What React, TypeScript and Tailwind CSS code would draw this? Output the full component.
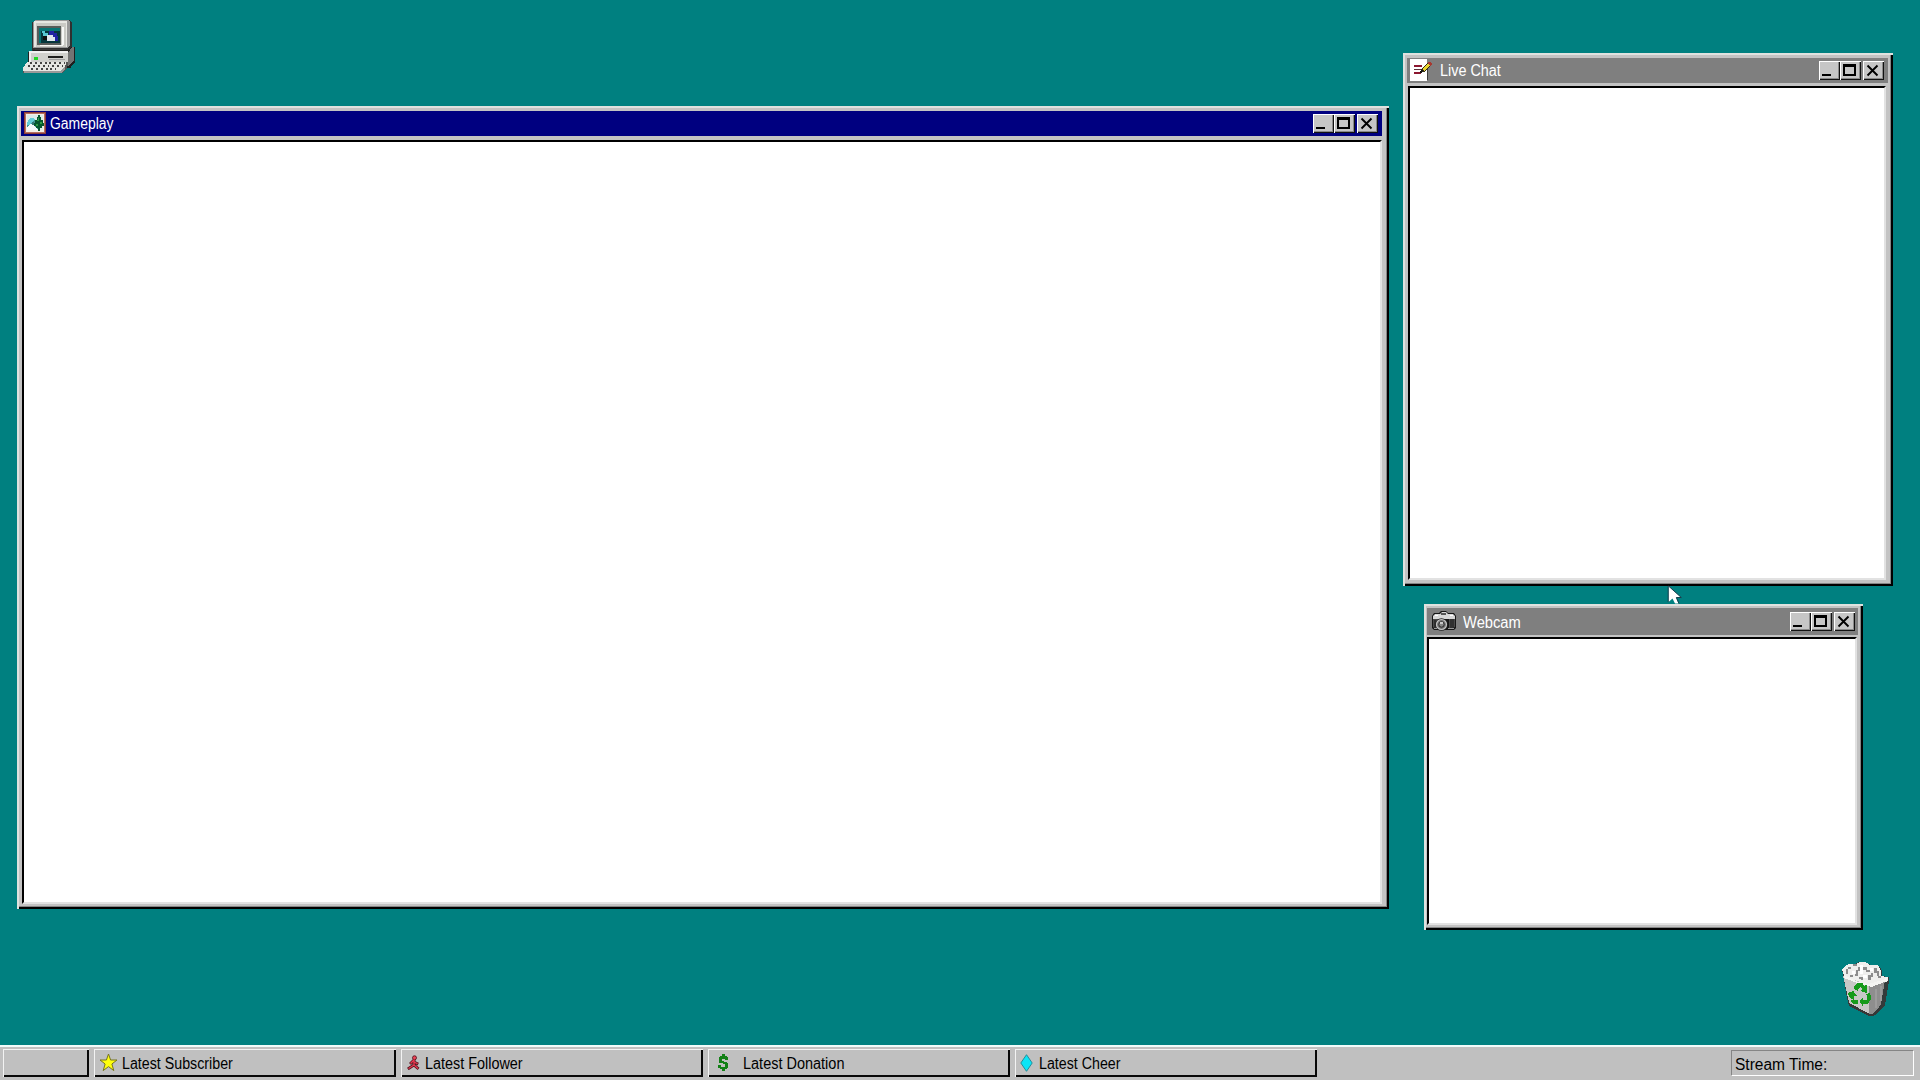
import type { ReactNode } from "react";

const raised =
  "bg-[#c3c3c3] shadow-[inset_2px_2px_0_#dfe2df,inset_-2px_-2px_0_#000,inset_-3px_-3px_0_#858585]";

function Label({ children, className = "" }: { children: ReactNode; className?: string }) {
  return (
    <span
      className={`block origin-left whitespace-nowrap font-['Liberation_Sans',Arial,sans-serif] text-[16px] leading-[18px] ${className}`}
    >
      {children}
    </span>
  );
}

function ControlButton({ kind }: { kind: "min" | "max" | "close" }) {
  return (
    <div className="h-[19px] w-[21px] bg-[#c6c6c6] shadow-[inset_1px_1px_0_#fff,inset_-1px_-1px_0_#111,inset_-2px_-2px_0_#8a8a8a]">
      <svg width="21" height="19" viewBox="0 0 21 19" fill="none" shapeRendering={kind === "close" ? "auto" : "crispEdges"}>
        {kind === "min" && <path d="M3 13h9v2H3z" fill="#000" />}
        {kind === "max" && <path d="M3 3h13v12H3zM5 6v7h9V6z" fill="#000" fillRule="evenodd" />}
        {kind === "close" && <path d="M4.5 4.5l10 10M14.5 4.5l-10 10" stroke="#000" strokeWidth="1.9" />}
      </svg>
    </div>
  );
}

function Window({
  frame,
  bar,
  client,
  icon,
  title,
  titleClass,
  controls,
}: {
  frame: string;
  bar: string;
  client: string;
  icon: ReactNode;
  title: string;
  titleClass: string;
  controls: string;
}) {
  return (
    <section className={`absolute flex flex-col ${raised} ${frame}`}>
      <header className={`flex shrink-0 items-start ${bar}`}>
        {icon}
        <Label className={`text-white ${titleClass}`}>{title}</Label>
        <div className={`ml-auto flex ${controls}`}>
          <ControlButton kind="min" />
          <ControlButton kind="max" />
          <div className="ml-[2px]">
            <ControlButton kind="close" />
          </div>
        </div>
      </header>
      <div className={`grow border-2 border-t-black border-l-black border-r-[#e2e2e2] border-b-[#e2e2e2] bg-white ${client}`} />
    </section>
  );
}

function PictureIcon() {
  return (
    <svg className="mt-[1px] ml-[3px] shrink-0" width="22" height="22" viewBox="0 0 22 22" shapeRendering="crispEdges">
      <path d="M0 0h22v22H0z" fill="#8e3c36" />
      <path d="M1 1h20v20H1z" fill="#b5705f" />
      <path d="M2 2h18v18H2z" fill="#f4efe9" />
      <path d="M3 3h16v15H3z" fill="#dcece9" />
      <path d="M3 11l4-5h3l4 6v5H3z" fill="#3f9696" />
      <path d="M6 6h3l2 2-6 5H3v-2z" fill="#64cdd6" />
      <path d="M3 15l3-3 3 1 3 2 2 3H3z" fill="#f6fafa" />
      <path d="M8 10h2v3H8z" fill="#347774" />
      <path d="M14 3h2v2h1v3h2v3h1v3h-2v2h-2v3h-2v-3h-2v-2h-2v-3h1V8h2V5h1z" fill="#07572e" />
      <path d="M14 6h1v3h-2V8h1zM16 10h2v2h-2zM12 12h2v2h-2z" fill="#2c9c43" />
    </svg>
  );
}

function NoteIcon() {
  return (
    <svg className="mt-[1px] ml-[3px] shrink-0" width="22" height="22" viewBox="0 0 22 22" shapeRendering="crispEdges">
      <path d="M0 0h17v22H0z" fill="#fff" />
      <path d="M17 10h1v11h-1z" fill="#3d3d3d" />
      <path d="M4 6h8v2H4zM4 13h7v2H4z" fill="#8c1730" />
      <path d="M4 10h7v1H4z" fill="#5b3039" />
      <path d="M10 14l1-4 7-6 3 3-7 6z" fill="#302a12" />
      <path d="M12 10l6-5 2 2-6 5z" fill="#e9d52e" />
      <path d="M18 3h2l2 2-1 2h-1l-3-3z" fill="#a73830" />
      <path d="M11 11h2v1h-1v2h-2z" fill="#111" />
    </svg>
  );
}

function CameraIcon() {
  return (
    <svg className="mt-[3px] ml-[4px] shrink-0" width="26" height="21" viewBox="0 0 26 21">
      <path d="M1 5l2-3h5l2-2h5l2 2h6l2 3v12l-2 2H3l-2-2z" fill="#161616" />
      <path d="M2 5l2-2h5l2-2h4l2 2h5l2 2v3H2z" fill="#d7d7d7" />
      <path d="M10 2h5v2h-5z" fill="#555" />
      <path d="M4 4h3v1H4zM19 4h3v1h-3z" fill="#fff" />
      <path d="M2 8h6v9H3l-1-1zM18 8h6v8l-2 1h-4z" fill="#4a4a4a" />
      <path d="M20 8v9M22 8v9M4 9v8" stroke="#171717" />
      <circle cx="10.5" cy="13.5" r="6.3" fill="#222" />
      <circle cx="10.5" cy="13.5" r="5" fill="#737373" stroke="#c4c4c4" strokeWidth="1.2" />
      <circle cx="10.5" cy="13.5" r="2.7" fill="#868686" stroke="#2a2a2a" />
      <path d="M9 11h3v2H9z" fill="#c9c9c9" />
      <path d="M3 17.5h3M17 17.5h6" stroke="#999" />
    </svg>
  );
}

function ComputerIcon() {
  return (
    <svg className="absolute top-[19px] left-[23px]" width="52" height="55" viewBox="0 0 53 56" shapeRendering="crispEdges">
      <path d="M10 4l4-3h34l3 3v25l-4 4H10z" fill="#303030" transform="translate(-1 0)" />
      <path d="M10 3l3-2h33l2 2v24l-3 3H10z" fill="#999" />
      <path d="M11 2h34v27H11z" fill="#e7e7e3" />
      <path d="M13 4h31v25H13z" fill="#cacac5" />
      <path d="M14 7h25v19H14z" fill="#575b59" />
      <path d="M16 9h22v15H16z" fill="#06363c" />
      <path d="M16 9h22v3H16zM16 12h2v12h-2z" fill="#087475" />
      <path d="M19 12h3v2h3v3h3v2h-4v-2h-4v-3h-1z" fill="#56c7d2" />
      <path d="M26 12h6v2h3v3h1v5h-8v-4h-2z" fill="#2122a2" />
      <path d="M24 16h7v2h2v4h-9z" fill="#dfe6ec" />
      <path d="M20 17h4v4h-4z" fill="#111" />
      <path d="M40 8h2v18h-2zM17 26h24v1H17z" fill="#f7f7f5" />
      <path d="M12 31h30v2H12z" fill="#3b3b3b" />
      <path d="M5 34l5-2h35l5-4h3v16l-5 6H5z" fill="#202020" />
      <path d="M6 33h40v12H6z" fill="#d0d0cd" />
      <path d="M46 34l4-5h2v13l-6 6z" fill="#747474" />
      <path d="M6 33h40v2H6zM6 35h2v9H6z" fill="#f0f0f0" />
      <path d="M25 38h16v2H25z" fill="#1d1d1d" />
      <path d="M26 41h17v1H26z" fill="#a0a0a0" />
      <path d="M11 39h4v3h-4z" fill="#22d626" />
      <path d="M4 44h42l-1 6-5 5H0v-4z" fill="#555" />
      <path d="M4 44h40l-1 4-5 5H0v-3z" fill="#e6e6e3" />
      <path d="M7 45h36M5 48h36M8 51h26" stroke="#444" strokeWidth="2" strokeDasharray="2 3" />
      <path d="M1 53h37l5-5v3l-4 4H1z" fill="#999" />
    </svg>
  );
}

function RecycleBinIcon() {
  return (
    <svg className="absolute top-[961px] left-[1841px]" width="49" height="55" viewBox="0 0 48 55" preserveAspectRatio="none" shapeRendering="crispEdges">
      <path d="M1 8l6-5h7l3-2h7l5 3h7l4 5v6l7 1v4l-4 25-9 9h-6L7 43z" fill="#333b3b" />
      <path d="M1 8l6-5h8l3-2h6l4 3h8l3 5v6l7 1v4l-17 7L3 15z" fill="#efefed" />
      <path d="M2 15l25 9v29L8 42z" fill="#c8c8c6" />
      <path d="M27 24l16-4-4 24-8 9h-4z" fill="#8e8e8e" />
      <path d="M3 14l8 4 6 3 10 2 14-4 4-3v4l-15 6-14-4L3 17z" fill="#f5f5f3" />
      <path d="M5 8h2V6h3v2H7v5H5zM12 3h4v2h-4zM15 9h2V6h2v4h-2v5h-3v-2h1zM22 6h3v3h3v2h-4V9h-2zM32 7h3v3h2v5h-2v-3h-3zM9 14h3v2H9zM18 16h4v3h-2v-1h-2zM26 14h3v-2h2v4h-2v3h-3zM36 15h3v2h-3z" fill="#8c8c8c" />
      <path d="M11 10h3v3h-3zM19 4h3v9h-3zM28 7h3v3h-3zM22 14h3v3h-3z" fill="#fff" />
      <path
        d="M14 27l4-5h5l2 3 2-1v8l-6-2 2-2-2-2-3 4zM9 32l5-2 4 5h-3v4l-3-1-3-4zM13 39h6v4h-5l-3-3zM20 40l4-4v3h3v-5l-1-1 4-1 2 5-4 6h-4v3z"
        fill="#169a1a"
        transform="translate(-2 0)"
      />
      <path d="M33 28h2v19h-2zM38 25h2v15h-2z" fill="#9c9c9c" />
      <path d="M8 42l20 11h4l8-9-1 4-7 7h-5L8 45z" fill="#373737" />
    </svg>
  );
}

function Star() {
  return (
    <svg className="mt-[4px] ml-[5px] shrink-0" width="19" height="19" viewBox="0 0 19 19">
      <path d="M9.5 1l2.1 6H18l-5.1 4 1.9 6.6-5.3-4-5.3 4L6.1 11 1 7h6.4z" fill="#ffff0b" stroke="#77751d" strokeWidth="1" />
    </svg>
  );
}

function Runner() {
  return (
    <svg className="mt-[6px] ml-[6px] shrink-0" width="13" height="15" viewBox="0 0 13 15">
      <path d="M7 5L4 8M7 6v4l-5 3.2M7 7l3 1.5M7 10l3.5 3" fill="none" stroke="#541620" strokeWidth="2.8" strokeLinecap="square" />
      <circle cx="7.5" cy="2.8" r="2" fill="#f04357" stroke="#541620" strokeWidth=".9" />
      <path d="M7 5L4 8M7 6v4l-5 3.2M7 7l3 1.5M7 10l3.5 3" fill="none" stroke="#e93850" strokeWidth="1.3" strokeLinecap="square" />
    </svg>
  );
}

function Dollar() {
  return (
    <svg className="mt-[5px] ml-[10px] shrink-0" width="11" height="18" viewBox="0 0 11 18" shapeRendering="crispEdges">
      <path d="M4 0h3v2h2v1h1v3H7V5H4v2h2v1h3v1h1v5H9v1H7v2H4v-2H2v-1H0v-3h3v2h4v-3H5v-1H2V9H1V3h1V2h2z" fill="#138016" />
    </svg>
  );
}

function Diamond() {
  return (
    <svg className="mt-[5px] ml-[5px] shrink-0" width="13" height="18" viewBox="0 0 13 18">
      <path d="M6.5.7l5.7 8.3-5.7 8.3L.8 9z" fill="#0be5f7" stroke="#268d99" />
    </svg>
  );
}

function TaskButton({ icon, text, label }: { icon: ReactNode; text: string; label: string }) {
  return (
    <div className="flex h-[28px] w-[302px] bg-[#c0c0c0] shadow-[inset_1px_1px_0_#f3f3f3,inset_-2px_-2px_0_#080808]">
      {icon}
      <Label className={`mt-[6px] text-black ${label}`}>{text}</Label>
    </div>
  );
}

export default function App() {
  return (
    <main className="relative flex h-[1080px] w-[1920px] flex-col justify-end overflow-hidden bg-[#008080]">
      <ComputerIcon />
      <Window
        frame="left-[17px] top-[106px] h-[803px] w-[1372px] pt-[5px] pr-[7px] pb-[5px] pl-[4px]"
        bar="h-[25px] bg-[#000080]"
        client="mt-[4px] ml-[1px]"
        icon={<PictureIcon />}
        title="Gameplay"
        titleClass="mt-[4px] ml-[4px] scale-x-[.87]"
        controls="mt-[3px] mr-[4px]"
      />
      <Window
        frame="left-[1403px] top-[53px] h-[533px] w-[490px] pt-[5px] pr-[5px] pb-[6px] pl-[4px]"
        bar="h-[25px] bg-[#7f7f7f]"
        client="mt-[3px] ml-[1px] mr-[2px]"
        icon={<NoteIcon />}
        title="Live Chat"
        titleClass="mt-[4px] ml-[8px] scale-x-[.9]"
        controls="mt-[3px] mr-[4px]"
      />
      <Window
        frame="left-[1424px] top-[604px] h-[326px] w-[439px] pt-[4px] pr-[5px] pb-[5px] pl-[3px]"
        bar="h-[27px] bg-[#7f7f7f]"
        client="mt-[2px] mr-[1px]"
        icon={<CameraIcon />}
        title="Webcam"
        titleClass="mt-[6px] ml-[6px] scale-x-[.92]"
        controls="mt-[4px] mr-[3px]"
      />
      <svg className="absolute top-[585px] left-[1667px]" width="16" height="19" viewBox="0 0 16 19">
        <path d="M1.5 1v16l4-3.4L8 18.5h3.5L9 12.5h5.2z" fill="#fff" />
        <path d="M1.2 1v16M1.5 1l12.8 11.5H9.4l2.6 6" fill="none" stroke="#163d4d" strokeWidth="1" />
      </svg>
      <RecycleBinIcon />

      <footer className="flex h-[35px] shrink-0 items-start border-t-2 border-[#f0fbfa] bg-[#c0c0c0] pt-[2px] pl-[3px]">
        <div className="mr-[5px] h-[28px] w-[86px] shadow-[inset_1px_1px_0_#f3f3f3,inset_-2px_-2px_0_#080808]" />
        <div className="flex gap-[5px]">
          <TaskButton icon={<Star />} text="Latest Subscriber" label="ml-[4px] scale-x-[.89]" />
          <TaskButton icon={<Runner />} text="Latest Follower" label="ml-[5px] scale-x-[.9]" />
          <TaskButton icon={<Dollar />} text="Latest Donation" label="ml-[14px] scale-x-[.905]" />
          <TaskButton icon={<Diamond />} text="Latest Cheer" label="ml-[6px] scale-x-[.89]" />
        </div>
        <div className="mt-[1px] mr-[6px] ml-auto h-[26px] w-[183px] border border-t-[#858585] border-r-white border-b-white border-l-[#858585] pt-[5px] pl-[3px]">
          <Label className="scale-x-[.97] text-black">Stream Time:</Label>
        </div>
      </footer>
    </main>
  );
}
